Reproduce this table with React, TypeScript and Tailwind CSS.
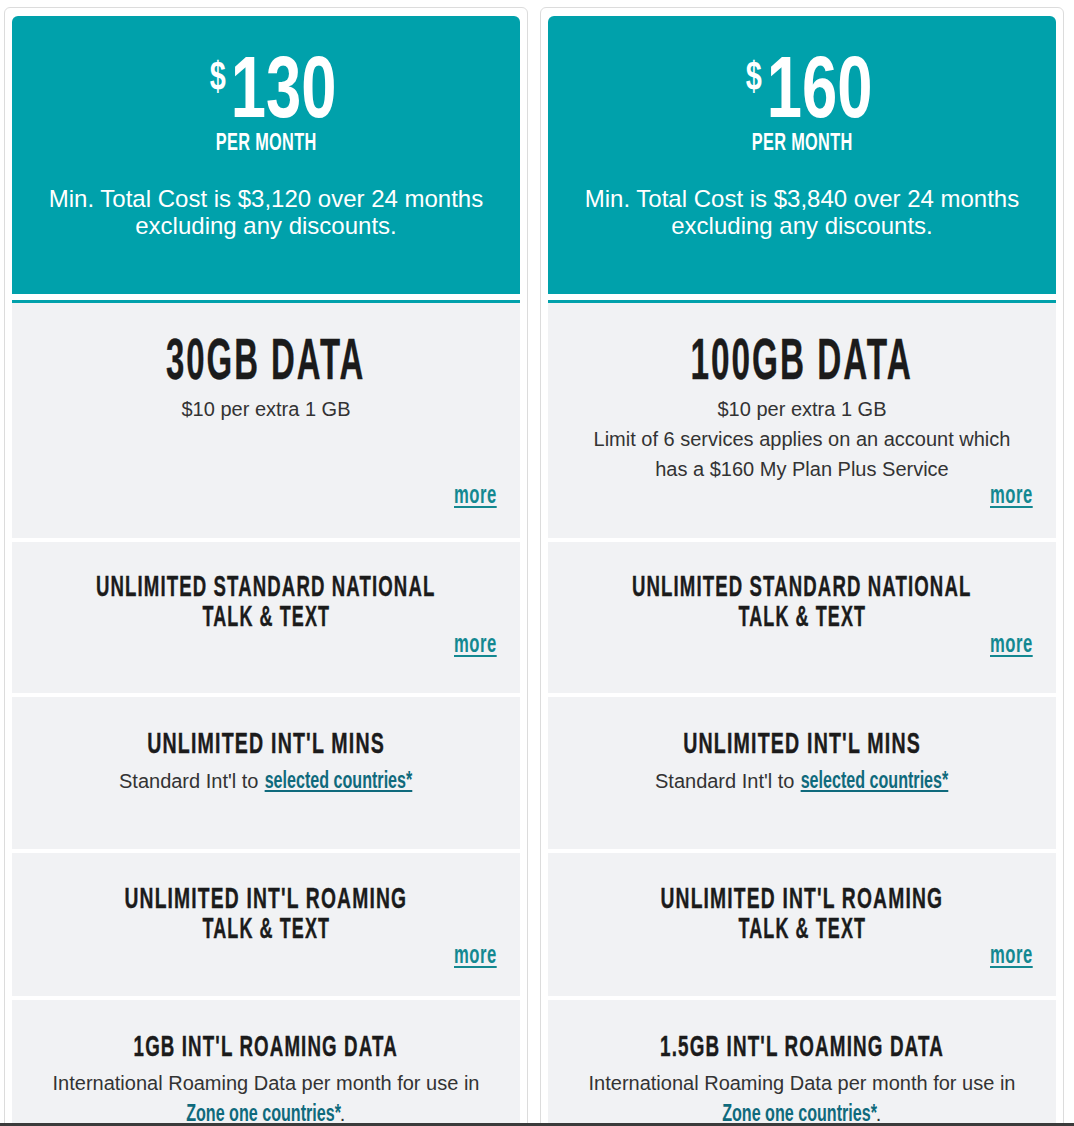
import React from 'react'

type Line = { t: string; s: string }

interface Plan {
  price: string
  total: string
  data: Line
  dataNotes: string[]
  roaming: Line
}

const TEAL = 'bg-[#00a1ab]'

const plans: Plan[] = [
  {
    price: '130',
    total: '$3,120',
    data: { t: '30GB DATA', s: 'scale-x-[0.567]' },
    dataNotes: ['$10 per extra 1 GB'],
    roaming: { t: "1GB INT'L ROAMING DATA", s: 'scale-x-[0.624]' },
  },
  {
    price: '160',
    total: '$3,840',
    data: { t: '100GB DATA', s: 'scale-x-[0.574]' },
    dataNotes: [
      '$10 per extra 1 GB',
      'Limit of 6 services applies on an account which',
      'has a $160 My Plan Plus Service',
    ],
    roaming: { t: "1.5GB INT'L ROAMING DATA", s: 'scale-x-[0.628]' },
  },
]

const nationalTitle: Line[] = [
  { t: 'UNLIMITED STANDARD NATIONAL', s: 'scale-x-[0.62]' },
  { t: 'TALK & TEXT', s: 'scale-x-[0.6]' },
]
const minsTitle: Line[] = [{ t: "UNLIMITED INT'L MINS", s: 'scale-x-[0.653]' }]
const roamingTitle: Line[] = [
  { t: "UNLIMITED INT'L ROAMING", s: 'scale-x-[0.643]' },
  { t: 'TALK & TEXT', s: 'scale-x-[0.6]' },
]

// condensed headline: the font is squeezed sideways, flex keeps it centred
function Heading({ lines, size = 'text-[30px] leading-[30px]' }: { lines: Line[]; size?: string }) {
  return (
    <div className={`font-bold tracking-[0.06em] text-[#1b1b1b] [-webkit-text-stroke:0.4px_#1b1b1b] ${size}`}>
      {lines.map((l) => (
        <div key={l.t} className="flex justify-center">
          <span className={`shrink-0 whitespace-nowrap ${l.s}`}>{l.t}</span>
        </div>
      ))}
    </div>
  )
}

function More({ className = '' }: { className?: string }) {
  return (
    <div className={`flex justify-end pr-[23px] ${className}`}>
      <a
        href="#"
        className="shrink-0 whitespace-nowrap origin-right scale-x-[0.64] tracking-[0.03em] text-[26px] leading-[26px] font-bold text-[#138891] underline decoration-2 underline-offset-[3px]"
      >
        more
      </a>
    </div>
  )
}

function CondLink({ children, w }: { children: React.ReactNode; w: string }) {
  return (
    <span className={`inline-flex justify-center align-baseline ${w}`}>
      <a
        href="#"
        className="shrink-0 whitespace-nowrap scale-x-[0.7] text-[23px] font-bold text-[#0f6a7c] underline decoration-2 underline-offset-[2px]"
      >
        {children}
      </a>
    </span>
  )
}

function PlanCard({ plan }: { plan: Plan }) {
  return (
    <div className="w-[524px] shrink-0 border border-[#dcdcdc] rounded-md px-[7px] pt-[8px]">
      <div className={`h-[278px] rounded-t-[6px] ${TEAL} text-white text-center`}>
        <div className="flex justify-center pt-[33px] pl-[14px]">
          <div className="flex items-start shrink-0 whitespace-nowrap font-bold scale-x-[0.72]">
            <span className="text-[40px] leading-[40px] mt-[7px] mr-[7px]">$</span>
            <span className="text-[88px] leading-[76px]">{plan.price}</span>
          </div>
        </div>
        <div className="flex justify-center mt-[5px]">
          <span className="shrink-0 whitespace-nowrap font-bold text-[24px] leading-[24px] tracking-[0.02em] scale-x-[0.68]">
            PER MONTH
          </span>
        </div>
        <p className="mt-[31px] text-[24px] leading-[27px]">
          Min. Total Cost is {plan.total} over 24 months
          <br />
          excluding any discounts.
        </p>
      </div>

      <div className="mt-[6px] flex flex-col gap-1">
        <div className="h-[238px] border-t-[3px] border-[#00a1ab] bg-[#f1f2f4] pt-[27px]">
          <Heading lines={[plan.data]} size="text-[58px] leading-[58px]" />
          <div className="mt-[6px] h-[87px] text-center text-[20px] leading-[30px] text-[#333]">
            {plan.dataNotes.map((n) => (
              <div key={n}>{n}</div>
            ))}
          </div>
          <More />
        </div>

        <div className="h-[151px] bg-[#f1f2f4] pt-[29px]">
          <Heading lines={nationalTitle} />
          <More className="-mt-[1px]" />
        </div>

        <div className="h-[152px] bg-[#f1f2f4] pt-[31px]">
          <Heading lines={minsTitle} />
          <p className="mt-[7px] text-center text-[20px] leading-[30px] text-[#333] whitespace-nowrap">
            Standard Int'l to <CondLink w="w-[149px]">selected countries*</CondLink>
          </p>
        </div>

        <div className="h-[143px] bg-[#f1f2f4] pt-[30px]">
          <Heading lines={roamingTitle} />
          <More className="-mt-[2px]" />
        </div>

        <div className="h-[170px] bg-[#f1f2f4] pt-[31px]">
          <Heading lines={[plan.roaming]} />
          <p className="mt-[7px] text-center text-[20px] leading-[30px] text-[#333] whitespace-nowrap">
            International Roaming Data per month for use in
            <br />
            <CondLink w="w-[153px]">Zone one countries*</CondLink>.
          </p>
        </div>
      </div>
    </div>
  )
}

export default function App() {
  return (
    <div className="min-h-screen bg-white flex gap-3 pl-1 pt-[7px] font-['Liberation_Sans',Arial,sans-serif]">
      {plans.map((p) => (
        <PlanCard key={p.price} plan={p} />
      ))}
      <div className="fixed bottom-0 inset-x-0 h-[3px] bg-[#3b3b3b]" />
    </div>
  )
}
